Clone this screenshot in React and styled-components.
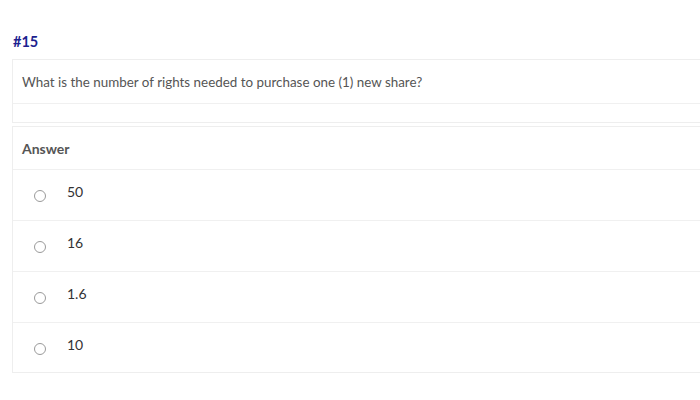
import React from 'react';
import styled, { createGlobalStyle } from 'styled-components';

const GlobalStyle = createGlobalStyle`
  html, body {
    margin: 0;
    padding: 0;
    background: #ffffff;
    overflow: hidden;
  }
  body {
    font-family: 'Lato', 'Open Sans', sans-serif;
  }
`;

const options = ['50', '16', '1.6', '10'];

const App = () => {
  return (
    <>
      <GlobalStyle />
      <Page>
        <Number>#15</Number>
        <Card>
          <QuestionRow>
            What is the number of rights needed to purchase one (1) new share?
          </QuestionRow>
          <EmptyRow />
        </Card>
        <Card>
          <AnswerHead>Answer</AnswerHead>
          {options.map((opt, i) => (
            <OptionRow key={opt} last={i === options.length - 1}>
              <Radio />
              <OptionText>{opt}</OptionText>
            </OptionRow>
          ))}
        </Card>
      </Page>
    </>
  );
};

const Page = styled.div`
  padding: 33px 0 0 12px;
  display: flex;
  flex-direction: column;
`;

const Number = styled.div`
  font-size: 14.5px;
  font-weight: 700;
  color: #1d1f8f;
  padding-left: 1px;
  line-height: 18px;
  margin-bottom: 8px;
`;

const Card = styled.div`
  border: 1px solid #eeeeee;
  border-right: none;
  background: #fff;
  margin-bottom: 3px;
`;

const QuestionRow = styled.div`
  height: 43px;
  display: flex;
  align-items: center;
  padding-left: 9px;
  font-size: 13.4px;
  color: #555555;
  border-bottom: 1px solid #f0f0f0;
`;

const EmptyRow = styled.div`
  height: 18px;
`;

const AnswerHead = styled.div`
  height: 42px;
  display: flex;
  align-items: center;
  padding-left: 9px;
  font-size: 14px;
  font-weight: 700;
  color: #555555;
  border-bottom: 1px solid #f0f0f0;
`;

const OptionRow = styled.div`
  height: ${({ last }) => (last ? '49px' : '50px')};
  display: flex;
  align-items: center;
  padding-left: 21px;
  border-bottom: ${({ last }) => (last ? 'none' : '1px solid #f0f0f0')};
`;

const Radio = styled.span`
  width: 10px;
  height: 10px;
  border: 1px solid #9a9a9a;
  border-radius: 50%;
  margin-top: 2px;
  margin-right: 21px;
  flex-shrink: 0;
`;

const OptionText = styled.span`
  font-size: 14px;
  color: #333333;
  margin-top: -7px;
`;

export default App;
